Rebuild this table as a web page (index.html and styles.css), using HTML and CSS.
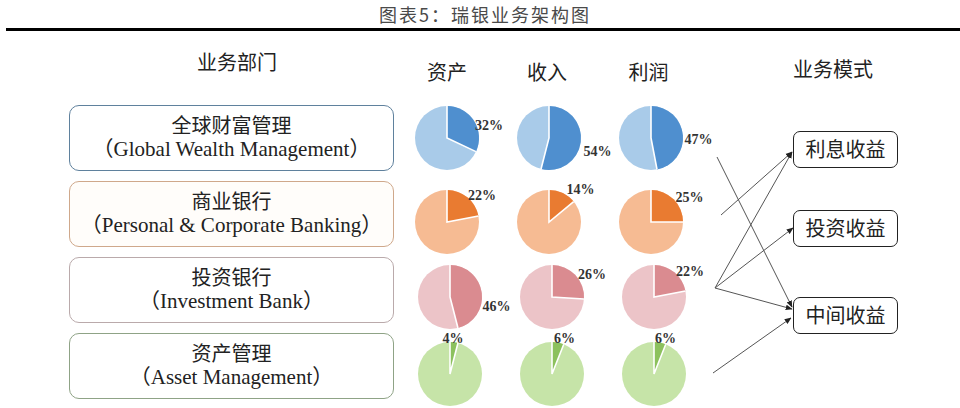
FILE: index.html
```html
<!DOCTYPE html>
<html lang="zh">
<head>
<meta charset="utf-8">
<title>瑞银业务架构图</title>
<link rel="stylesheet" href="styles.css">
</head>
<body>
<div class="page">
  <div class="title">图表5：瑞银业务架构图</div>
  <div class="main">
    <div class="depts">
      <div class="head dept-head">业务部门</div>
      <div class="box wealth"><div class="cn">全球财富管理</div><div class="en">（Global Wealth Management）</div></div>
      <div class="box personal"><div class="cn">商业银行</div><div class="en">（Personal &amp; Corporate Banking）</div></div>
      <div class="box invest"><div class="cn">投资银行</div><div class="en">（Investment Bank）</div></div>
      <div class="box asset"><div class="cn">资产管理</div><div class="en">（Asset Management）</div></div>
    </div>

    <div class="pies">
      <div class="pie-head">
        <div class="head">资产</div>
        <div class="head">收入</div>
        <div class="head">利润</div>
      </div>
      <div class="pie-row r-wealth">
        <svg class="pie" viewBox="-32 -32 64 64"><circle r="32" class="lt"/><path class="dk" d="M0 0 L0 -32 A32 32 0 0 1 28.95 13.63 Z"/><path class="sep" d="M0 -32 L0 0 L28.95 13.63"/><text x="28" y="-8.5">32%</text></svg>
        <svg class="pie" viewBox="-32 -32 64 64"><circle r="32" class="lt"/><path class="dk" d="M0 0 L0 -32 A32 32 0 1 1 -7.96 31 Z"/><path class="sep" d="M0 -32 L0 0 L-7.96 31"/><text x="34.5" y="17.5">54%</text></svg>
        <svg class="pie" viewBox="-32 -32 64 64"><circle r="32" class="lt"/><path class="dk" d="M0 0 L0 -32 A32 32 0 0 1 6 31.43 Z"/><path class="sep" d="M0 -32 L0 0 L6 31.43"/><text x="33.5" y="5.5">47%</text></svg>
      </div>
      <div class="pie-row r-personal">
        <svg class="pie" viewBox="-32 -32 64 64"><circle r="32" class="lt"/><path class="dk" d="M0 0 L0 -32 A32 32 0 0 1 31.43 -6 Z"/><path class="sep" d="M0 -32 L0 0 L31.43 -6"/><text x="21" y="-22.5">22%</text></svg>
        <svg class="pie" viewBox="-32 -32 64 64"><circle r="32" class="lt"/><path class="dk" d="M0 0 L0 -32 A32 32 0 0 1 24.66 -20.4 Z"/><path class="sep" d="M0 -32 L0 0 L24.66 -20.4"/><text x="17.5" y="-28.5">14%</text></svg>
        <svg class="pie" viewBox="-32 -32 64 64"><circle r="32" class="lt"/><path class="dk" d="M0 0 L0 -32 A32 32 0 0 1 32 0 Z"/><path class="sep" d="M0 -32 L0 0 L32 0"/><text x="24.5" y="-20.5">25%</text></svg>
      </div>
      <div class="pie-row r-invest">
        <svg class="pie" viewBox="-32 -32 64 64"><circle r="32" class="lt"/><path class="dk" d="M0 0 L0 -32 A32 32 0 0 1 7.96 31 Z"/><path class="sep" d="M0 -32 L0 0 L7.96 31"/><text x="32.5" y="13.5">46%</text></svg>
        <svg class="pie" viewBox="-32 -32 64 64"><circle r="32" class="lt"/><path class="dk" d="M0 0 L0 -32 A32 32 0 0 1 31.94 2.01 Z"/><path class="sep" d="M0 -32 L0 0 L31.94 2.01"/><text x="26" y="-18.5">26%</text></svg>
        <svg class="pie" viewBox="-32 -32 64 64"><circle r="32" class="lt"/><path class="dk" d="M0 0 L0 -32 A32 32 0 0 1 31.43 -6 Z"/><path class="sep" d="M0 -32 L0 0 L31.43 -6"/><text x="22" y="-21.5">22%</text></svg>
      </div>
      <div class="pie-row r-asset">
        <svg class="pie" viewBox="-32 -32 64 64"><circle r="32" class="lt"/><path class="dk" d="M0 0 L0 -32 A32 32 0 0 1 7.96 -31 Z"/><path class="sep" d="M0 -32 L0 0 L7.96 -31"/><text x="-7.5" y="-31.5">4%</text></svg>
        <svg class="pie" viewBox="-32 -32 64 64"><circle r="32" class="lt"/><path class="dk" d="M0 0 L0 -32 A32 32 0 0 1 11.78 -29.75 Z"/><path class="sep" d="M0 -32 L0 0 L11.78 -29.75"/><text x="2" y="-31.5">6%</text></svg>
        <svg class="pie" viewBox="-32 -32 64 64"><circle r="32" class="lt"/><path class="dk" d="M0 0 L0 -32 A32 32 0 0 1 11.78 -29.75 Z"/><path class="sep" d="M0 -32 L0 0 L11.78 -29.75"/><text x="1" y="-31.5">6%</text></svg>
      </div>
    </div>

    <div class="models">
      <div class="head model-head">业务模式</div>
      <div class="mbox">利息收益</div>
      <div class="mbox">投资收益</div>
      <div class="mbox">中间收益</div>
    </div>
  </div>

  <svg class="links" viewBox="0 0 960 408" width="960" height="408">
    <defs>
      <marker id="arr" viewBox="0 0 10 10" refX="9" refY="5" markerWidth="7" markerHeight="7" orient="auto" markerUnits="userSpaceOnUse">
        <path d="M0 1 L10 5 L0 9 Z" fill="#222"/>
      </marker>
    </defs>
    <line x1="717" y1="157" x2="792" y2="307" marker-end="url(#arr)"/>
    <line x1="721" y1="215" x2="792" y2="152" marker-end="url(#arr)"/>
    <line x1="715" y1="288" x2="792" y2="152" marker-end="url(#arr)"/>
    <line x1="715" y1="288" x2="793" y2="228" marker-end="url(#arr)"/>
    <line x1="715" y1="288" x2="792" y2="309" marker-end="url(#arr)"/>
    <line x1="713" y1="373" x2="791" y2="318" marker-end="url(#arr)"/>
  </svg>
</div>
</body>
</html>
```

FILE: styles.css
```css
* { box-sizing: border-box; }

html, body {
  margin: 0;
  padding: 0;
  background: #ffffff;
}

body {
  width: 960px;
  height: 408px;
  overflow: hidden;
  font-family: "Noto Sans CJK SC", "Noto Sans", sans-serif;
  color: #222;
}

.page {
  position: relative;
  width: 960px;
  height: 408px;
}

.title {
  margin-left: 6px;
  height: 31px;
  padding-top: 2px;
  padding-left: 4px;
  line-height: 24px;
  border-bottom: 3px solid #000;
  text-align: center;
  font-size: 18px;
  letter-spacing: 2px;
  color: #4a4a4a;
  font-weight: normal;
}

.main {
  display: flex;
  align-items: flex-start;
}

.head {
  font-size: 20px;
  line-height: 20px;
  color: #222;
  white-space: nowrap;
}

/* ---------- departments ---------- */
.depts {
  margin-left: 69px;
  width: 325px;
  display: flex;
  flex-direction: column;
  gap: 10px;
}

.dept-head {
  height: 64px;
  padding-top: 21px;
  padding-left: 11px;
  text-align: center;
}

.box {
  height: 66px;
  border: 1.5px solid #5f7f99;
  border-radius: 10px;
  display: flex;
  flex-direction: column;
  align-items: center;
  justify-content: center;
  padding-bottom: 2px;
}

.box .cn {
  font-size: 20px;
  line-height: 24px;
  color: #222;
}

.box .en {
  font-family: "Liberation Serif", "Noto Sans CJK SC", serif;
  font-size: 21px;
  line-height: 24px;
  color: #222;
  white-space: nowrap;
}

.box.wealth { border-color: #5f819d; }
.box.personal { border-color: #cfa88b; background: #fffdfa; }
.box.invest { border-color: #baaaab; }
.box.asset { border-color: #8fa386; }

/* ---------- pies ---------- */
.pies {
  margin-left: 21px;
  width: 271px;
  display: flex;
  flex-direction: column;
}

.pie-head {
  display: flex;
  gap: 38px;
  height: 75px;
  padding-top: 31px;
}

.pie-head .head {
  width: 64px;
  text-align: center;
}

.pie-head .head:nth-child(3) { text-indent: -5px; }
.pie-head .head:nth-child(2) { text-indent: -4px; }

.pie-row {
  display: flex;
  gap: 38px;
  height: 65px;
}

.r-wealth { margin-bottom: 19px; }
.r-personal { margin-bottom: 10px; }
.r-invest { margin-bottom: 12px; padding-left: 3px; }
.r-asset { padding-left: 3px; }

.pie {
  width: 64px;
  height: 64px;
  overflow: visible;
  flex: none;
}

.pie text {
  font-family: "Liberation Serif", serif;
  font-weight: bold;
  font-size: 14px;
  fill: #333;
}

.pie .sep {
  fill: none;
  stroke: #fff;
  stroke-width: 1.6;
}

.r-wealth .lt { fill: #a9cbe9; }
.r-wealth .dk { fill: #4f8fcf; }
.r-personal .lt { fill: #f6bb93; }
.r-personal .dk { fill: #e97b31; }
.r-invest .lt { fill: #ecc4c8; }
.r-invest .dk { fill: #da8b90; }
.r-asset .lt { fill: #c6e4a8; }
.r-asset .dk { fill: #8cc15d; }

/* ---------- models ---------- */
.models {
  margin-left: 107px;
  width: 105px;
  display: flex;
  flex-direction: column;
  gap: 42px;
}

.model-head {
  height: 58px;
  padding-top: 28px;
  padding-right: 29px;
  text-align: center;
}

.mbox {
  height: 37px;
  border: 1.5px solid #222;
  border-radius: 7px;
  background: #fff;
  font-size: 20px;
  line-height: 34px;
  text-align: center;
  color: #222;
}

.mbox:last-child { margin-top: 8px; }

/* ---------- connectors overlay ---------- */
.links {
  position: absolute;
  left: 0;
  top: 0;
  pointer-events: none;
}

.links line {
  stroke: #555;
  stroke-width: 1;
}
```
